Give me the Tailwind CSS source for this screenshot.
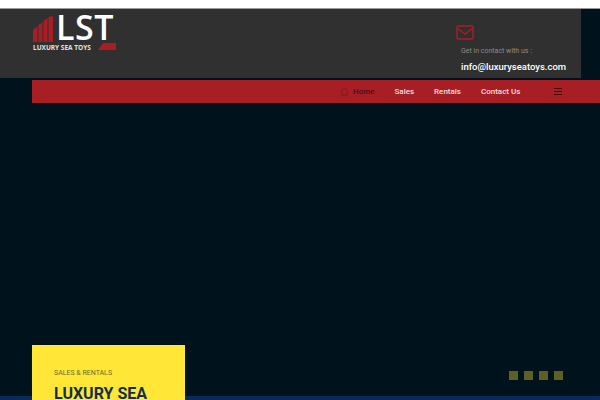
<!DOCTYPE html>
<html lang="en">
<head>
<meta charset="utf-8">
<title>Luxury Sea Toys</title>
<script src="https://cdn.jsdelivr.net/npm/@tailwindcss/browser@4"></script>
</head>
<body class="bg-[#00121c] font-['Roboto',sans-serif]">
<div class="w-[600px] h-[400px] overflow-hidden flex flex-col">
  <div class="h-2 bg-white shrink-0"></div>
  <div class="h-px bg-[#9a9a9a] shrink-0"></div>

  <!-- header -->
  <header class="w-[581px] h-[69px] shrink-0 bg-[#303030] flex justify-between pl-[33px]">
    <div class="w-[84px] pt-[6px] relative">
      <div class="flex items-start h-[26px]">
        <svg class="w-[20px] h-[26px] mt-[1px] shrink-0" viewBox="0 0 20 26">
          <polygon points="0,14 4.5,10 4.5,26 0,26" fill="#a81e25"/>
          <polygon points="5.5,9 9.5,6 9.5,26 5.5,26" fill="#a81e25"/>
          <polygon points="10.5,5 14.5,2 14.5,26 10.5,26" fill="#a81e25"/>
          <polygon points="15.5,1 20,0 20,26 15.5,26" fill="#a81e25"/>
        </svg>
        <span class="ml-[3px] text-[34px] leading-[25px] font-semibold font-['Open_Sans',sans-serif] text-white tracking-[0.5px] whitespace-nowrap">LST</span>
      </div>
      <p class="mt-[2px] text-[6.5px] leading-[9px] font-bold font-['Open_Sans',sans-serif] text-[#e4e4e4] whitespace-nowrap">LUXURY SEA TOYS</p>
      <svg class="absolute left-[65px] top-[34px] w-[18px] h-[7px]" viewBox="0 0 18 7">
        <polygon points="5,0 18,0 18,7 0,7" fill="#a81e25"/>
      </svg>
    </div>
    <div class="w-[120px] pt-[16px]">
      <svg class="w-[18px] h-[15px] ml-[-5px]" viewBox="0 0 18 15" fill="none" stroke="#a81e25" stroke-width="1.4">
        <rect x="1" y="1" width="16" height="13" rx="1"/>
        <path d="M1 3l8 6 8-6"/>
      </svg>
      <p class="mt-[5px] text-[7px] leading-3 text-[#8c8c8c] whitespace-nowrap">Get in contact with us :</p>
      <p class="mt-[2px] text-[9.5px] leading-4 font-medium text-white whitespace-nowrap">info@luxuryseatoys.com</p>
    </div>
  </header>

  <!-- nav -->
  <nav class="ml-[32px] mt-[2px] h-[23px] shrink-0 bg-[#a81e25] flex items-center text-[8px] font-medium text-[#f3dfdf]">
    <svg class="ml-[308px] w-[9px] h-[9px]" viewBox="0 0 10 10" fill="none" stroke="#7d161c" stroke-width="1">
      <path d="M1 5l4-4 4 4M2 4.5V9h6V4.5"/>
    </svg>
    <span class="ml-[4px] text-[#4a0e12]">Home</span>
    <span class="ml-[20px]">Sales</span>
    <span class="ml-[20px]">Rentals</span>
    <span class="ml-[20px]">Contact Us</span>
    <div class="ml-[34px] w-[8px] flex flex-col gap-[2px]">
      <span class="h-px bg-[#3d0a0d]"></span>
      <span class="h-px bg-[#3d0a0d]"></span>
      <span class="h-px bg-[#3d0a0d]"></span>
    </div>
  </nav>

  <!-- hero -->
  <main class="flex-1 relative flex items-end">
    <div class="absolute left-0 right-0 bottom-0 h-1 bg-[#0a2a5e]"></div>
    <section class="relative ml-[32px] w-[153px] h-[55px] bg-[#ffe637] pl-[22px] pt-[23px] overflow-hidden">
      <p class="text-[7px] leading-[10px] text-[#6f6a2c] whitespace-nowrap">SALES &amp; RENTALS</p>
      <h1 class="mt-[6px] text-[16px] leading-5 font-bold text-[#10304f] whitespace-nowrap">LUXURY SEA</h1>
    </section>
    <div class="relative ml-[324px] mb-[20px] flex gap-[6px]">
      <span class="w-[9px] h-[9px] bg-[#5d5f23]"></span>
      <span class="w-[9px] h-[9px] bg-[#5d5f23]"></span>
      <span class="w-[9px] h-[9px] bg-[#5d5f23]"></span>
      <span class="w-[9px] h-[9px] bg-[#5d5f23]"></span>
    </div>
  </main>
</div>
</body>
</html>
